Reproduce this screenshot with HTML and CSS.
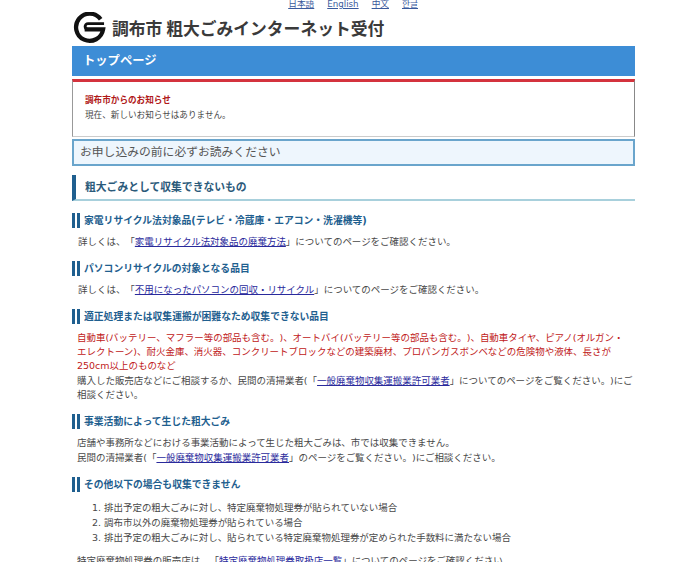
FILE: index.html
```html
<!DOCTYPE html>
<html lang="ja">
<head>
<meta charset="utf-8">
<title>調布市 粗大ごみインターネット受付</title>
<link rel="stylesheet" href="styles.css">
</head>
<body>
<div class="page">
  <nav class="langs">
    <a href="#">日本語</a><a href="#">English</a><a href="#">中文</a><a href="#">한글</a>
  </nav>
  <header class="brand">
    <svg class="logo" viewBox="0 0 34 34" aria-hidden="true">
      <path d="M28.5 7.5A14 14 0 1 0 31 18H12" fill="none" stroke="#111" stroke-width="4.4"/>
      <path d="M32 12H15.5a3 3 0 0 0 0 6" fill="none" stroke="#111" stroke-width="3"/>
    </svg>
    <span class="site-title">調布市 粗大ごみインターネット受付</span>
  </header>
  <div class="page-bar">トップページ</div>
  <section class="notice">
    <h4>調布市からのお知らせ</h4>
    <p>現在、新しいお知らせはありません。</p>
  </section>
  <div class="readme">お申し込みの前に必ずお読みください</div>
  <h2 class="sec">粗大ごみとして収集できないもの</h2>

  <h3 class="sub">家電リサイクル法対象品(テレビ・冷蔵庫・エアコン・洗濯機等)</h3>
  <p class="txt inset">詳しくは、「<a href="#">家電リサイクル法対象品の廃棄方法</a>」についてのページをご確認ください。</p>

  <h3 class="sub">パソコンリサイクルの対象となる品目</h3>
  <p class="txt inset">詳しくは、「<a href="#">不用になったパソコンの回収・リサイクル</a>」についてのページをご確認ください。</p>

  <h3 class="sub">適正処理または収集運搬が困難なため収集できない品目</h3>
  <p class="txt"><span class="red">自動車(バッテリー、マフラー等の部品も含む。)、オートバイ(バッテリー等の部品も含む。)、自動車タイヤ、ピアノ(オルガン・<br>エレクトーン)、耐火金庫、消火器、コンクリートブロックなどの建築廃材、プロパンガスボンベなどの危険物や液体、長さが<br>250cm以上のものなど</span><br>購入した販売店などにご相談するか、民間の清掃業者(「<a href="#">一般廃棄物収集運搬業許可業者</a>」についてのページをご覧ください。)にご相談ください。</p>

  <h3 class="sub">事業活動によって生じた粗大ごみ</h3>
  <p class="txt">店舗や事務所などにおける事業活動によって生じた粗大ごみは、市では収集できません。<br>民間の清掃業者(「<a href="#">一般廃棄物収集運搬業許可業者</a>」のページをご覧ください。)にご相談ください。</p>

  <h3 class="sub">その他以下の場合も収集できません</h3>
  <ol class="conds">
    <li>排出予定の粗大ごみに対し、特定廃棄物処理券が貼られていない場合</li>
    <li>調布市以外の廃棄物処理券が貼られている場合</li>
    <li>排出予定の粗大ごみに対し、貼られている特定廃棄物処理券が定められた手数料に満たない場合</li>
  </ol>
  <p class="txt">特定廃棄物処理券の販売店は、「<a href="#">特定廃棄物処理券取扱店一覧</a>」についてのページをご確認ください。</p>
</div>
</body>
</html>
```
FILE: styles.css
```css
html, body { margin: 0; padding: 0; background: #fff; height: 562px; overflow: hidden; }
body { font-family: "DejaVu Sans", "Noto Sans CJK JP", sans-serif; color: #484848; font-size: 9.47px; line-height: 14.4px; text-spacing-trim: space-all; }
a { color: #2a2a9c; }
.page { width: 563px; margin-left: 72px; }
.langs { display: flex; justify-content: flex-end; gap: 13px; padding-right: 217px; height: 8px; margin-bottom: 2px; font-size: 8.7px; line-height: 8px; }
.langs a { color: #3b5a9c; }
.brand { display: flex; align-items: center; gap: 6px; height: 36px; padding-left: 1px; }
.logo { width: 33px; height: 33px; flex: none; }
.site-title { font-family: "Noto Sans CJK JP", sans-serif; font-size: 16.8px; font-weight: 700; color: #3a3a3a; white-space: nowrap; }
.page-bar { background: #3d8dd6; height: 30px; line-height: 30px; padding-left: 11px; color: #fff; font-size: 12.3px; font-weight: 700; }
.notice { margin-top: 3px; height: 58px; box-sizing: border-box; border-top: 3px solid #d4333d; border-left: 1px solid #999; border-right: 1px solid #888; border-bottom: 1px solid #ccc; padding: 11px 0 0 12px; }
.notice h4 { margin: 0; font-size: 8.6px; line-height: 15px; color: #b01818; font-weight: 700; }
.notice p { margin: 0; font-size: 8.6px; line-height: 15px; }
.readme { margin-top: 2px; height: 27px; box-sizing: border-box; border: 2px solid #6aa5cc; background: #eef6fd; padding-left: 6px; font-size: 11.8px; line-height: 23px; color: #555; }
.sec { margin: 9px 0 0; height: 26px; box-sizing: border-box; border-left: 4px solid #1f5f8f; border-bottom: 2px solid #a8d0dc; padding-left: 9px; font-size: 10.8px; line-height: 26px; font-weight: 700; color: #2b5a7a; }
.sub { margin: 11.6px 0 0; height: 15px; padding-left: 12px; font-size: 9.8px; line-height: 15px; font-weight: 700; color: #1f5f8f; white-space: nowrap; background: linear-gradient(to right, #1f5f8f 0 3px, transparent 3px 5px, #1f5f8f 5px 8px, transparent 8px); }
.txt { margin: 7px 0 0; padding-left: 5px; }
.inset { padding-left: 6px; }
.red { color: #c02020; }
.conds { margin: 8px 0 0; padding: 0 0 0 32px; }
.conds li { line-height: 15px; }
.conds + .txt { margin-top: 9px; }
```
